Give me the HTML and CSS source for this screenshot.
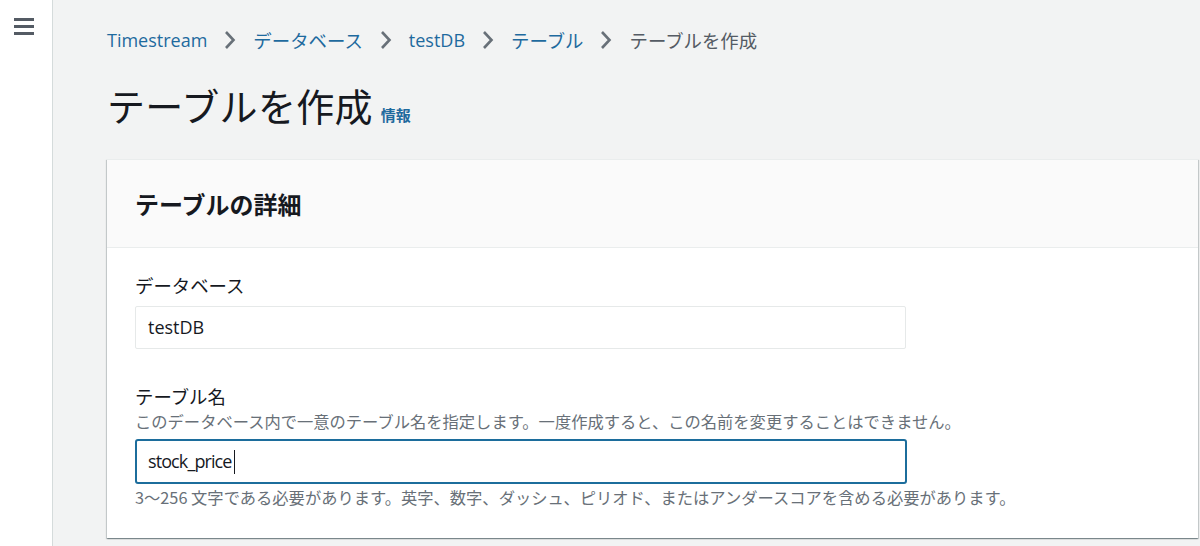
FILE: index.html
```html
<!DOCTYPE html>
<html lang="ja">
<head>
<meta charset="utf-8">
<link rel="stylesheet" href="styles.css">
</head>
<body>
<div class="app">
  <aside class="sidebar">
    <svg class="menu" width="22" height="18" viewBox="0 0 22 18"><rect x="0" y="1" width="20" height="3" fill="#545b64"/><rect x="0" y="8" width="20" height="3" fill="#545b64"/><rect x="0" y="15" width="20" height="3" fill="#545b64"/></svg>
  </aside>
  <main class="main">
    <nav class="crumbs">
      <a class="crumb latin">Timestream</a><span class="sep"><svg width="14" height="22" viewBox="0 0 14 22"><path d="M3 3 L10.5 11 L3 19" fill="none" stroke="#687078" stroke-width="2.6"/></svg></span>
      <a class="crumb">データベース</a><span class="sep"><svg width="14" height="22" viewBox="0 0 14 22"><path d="M3 3 L10.5 11 L3 19" fill="none" stroke="#687078" stroke-width="2.6"/></svg></span>
      <a class="crumb latin">testDB</a><span class="sep"><svg width="14" height="22" viewBox="0 0 14 22"><path d="M3 3 L10.5 11 L3 19" fill="none" stroke="#687078" stroke-width="2.6"/></svg></span>
      <a class="crumb">テーブル</a><span class="sep"><svg width="14" height="22" viewBox="0 0 14 22"><path d="M3 3 L10.5 11 L3 19" fill="none" stroke="#687078" stroke-width="2.6"/></svg></span>
      <span class="current">テーブルを作成</span>
    </nav>
    <div class="title-row">
      <h1 class="title">テーブルを作成</h1>
      <a class="info">情報</a>
    </div>
    <section class="card">
      <header class="card-head">
        <h2 class="card-title">テーブルの詳細</h2>
      </header>
      <div class="card-body">
        <div class="field">
          <label class="label">データベース</label>
          <div class="input readonly">testDB</div>
        </div>
        <div class="field">
          <label class="label">テーブル名</label>
          <p class="desc">このデータベース内で一意のテーブル名を指定します。一度作成すると、この名前を変更することはできません。</p>
          <div class="input focused">stock_price<span class="caret"></span></div>
          <p class="hint">3～256 文字である必要があります。英字、数字、ダッシュ、ピリオド、またはアンダースコアを含める必要があります。</p>
        </div>
      </div>
    </section>
  </main>
</div>
</body>
</html>
```
FILE: styles.css
```css
* { box-sizing: border-box; }
html, body { margin: 0; padding: 0; }
body {
  width: 1200px;
  height: 546px;
  overflow: hidden;
  background: #f2f3f3;
  font-family: "Open Sans", "Noto Sans CJK JP", sans-serif;
  color: #16191f;
}
.app { display: flex; height: 546px; }
.sidebar {
  width: 53px;
  flex: none;
  background: #fff;
  border-right: 1px solid #d5dbdb;
  padding: 17px 0 0 14px;
}
.menu { display: block; }
.main {
  flex: 1;
  padding: 26px 0 0 54px;
}
.crumbs {
  display: flex;
  align-items: center;
  font-size: 18.4px;
  height: 28px;
  font-family: "Noto Sans CJK JP", sans-serif;
}
.crumb { color: #1e6a9e; }
.crumb.latin { font-family: "Open Sans", sans-serif; font-size: 18px; }
.sep { display: flex; align-items: center; margin: 0 16px 0 16px; }
.current { color: #545b64; }
.title-row {
  display: flex;
  align-items: baseline;
  margin-top: 26px;
  height: 50px;
}
.title {
  margin: 0;
  font-size: 38px;
  font-weight: 400;
  line-height: 50px;
  font-family: "Noto Sans CJK JP", sans-serif;
  letter-spacing: 0.3px;
}
.info {
  margin-left: 8px;
  font-size: 15px;
  font-weight: 700;
  color: #1e6a9e;
  font-family: "Noto Sans CJK JP", sans-serif;
}
.card {
  margin-top: 29px;
  margin-right: 2px;
  background: #fff;
  box-shadow: 0 1px 1px 0 rgba(0,28,36,0.3), 1px 1px 1px 0 rgba(0,28,36,0.15), -1px 1px 1px 0 rgba(0,28,36,0.15);
  border-top: 1px solid #eaeded;
}
.card-head {
  background: #fafafa;
  border-bottom: 1px solid #eaeded;
  height: 88px;
  display: flex;
  align-items: center;
  padding-left: 28px;
}
.card-title {
  margin: 0;
  font-size: 24px;
  font-weight: 700;
  font-family: "Noto Sans CJK JP", sans-serif;
}
.card-body { padding: 23px 0 30px 28px; }
.field + .field { margin-top: 33px; }
.label {
  display: block;
  font-size: 18.4px;
  line-height: 28px;
  font-family: "Noto Sans CJK JP", sans-serif;
}
.desc {
  margin: 0;
  font-size: 16.3px;
  line-height: 22px;
  color: #687078;
  font-family: "Noto Sans CJK JP", sans-serif;
}
.input {
  width: 771px;
  height: 43px;
  margin-top: 7px;
  border: 1px solid #e6e9e9;
  border-radius: 2px;
  font-size: 18px;
  line-height: 41px;
  padding-left: 12px;
}
.input.readonly { color: #16191f; }
.input.focused {
  margin-top: 7px;
  width: 772px;
  height: 45px;
  border: 2px solid #1c6d9c;
  border-radius: 3px;
  padding-left: 11px;
  display: flex;
  align-items: center;
  font-family: "Open Sans", sans-serif;
  letter-spacing: -0.9px;
}
.caret { display: inline-block; width: 1px; height: 24px; background: #16191f; margin-left: 2px; }
.hint {
  margin: 2px 0 0;
  font-size: 16.3px;
  line-height: 22px;
  color: #687078;
  font-family: "Noto Sans CJK JP", sans-serif;
}
```
